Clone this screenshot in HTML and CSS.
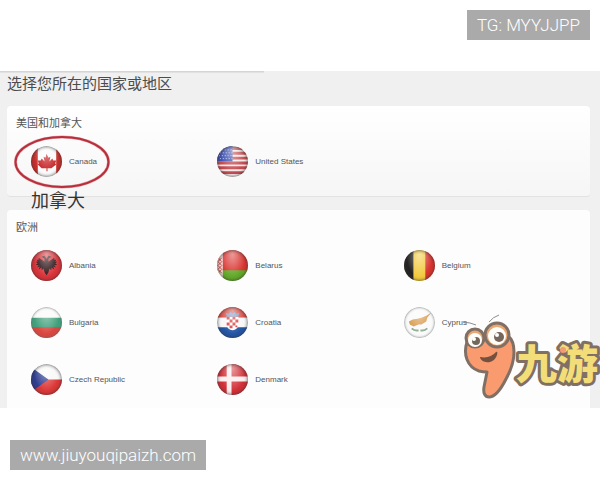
FILE: index.html
```html
<!DOCTYPE html>
<html lang="zh-CN">
<head>
<meta charset="utf-8">
<title>选择您所在的国家或地区</title>
<link rel="stylesheet" href="styles.css">
</head>
<body>
<header class="top"><span class="tag">TG: MYYJJPP</span></header>
<main class="picker">
  <h1 class="title">选择您所在的国家或地区</h1>
  <section class="panel panel-america">
    <h2 class="region">美国和加拿大</h2>
    <ul class="countries">
      <li class="country">
        <span class="flag"><svg viewBox="0 0 32 32"><path fill="#fafafa" d="M0 0h32v32H0z"/><path fill="#c92f2b" d="M0 0h7v32H0zM26 0h6v32h-6z"/><path fill="#c51f22" d="M16 8l2 4 2-1-1 5 3-3 1 2 3 0-1 3 1 1-5 4-4 0v3h-1v-3l-5 0-4-4 1-1-1-3 3 0 1-2 3 3-1-5 2 1z"/></svg></span>
        <span class="name">Canada</span>
        <svg class="ring" viewBox="0 0 96 54"><ellipse cx="48" cy="27" rx="46.500" ry="25" fill="none" stroke="#e8a0a5" stroke-width="3"/><ellipse cx="48" cy="27" rx="46.500" ry="25" fill="none" stroke="#b5303c" stroke-width="2"/></svg>
        <span class="note">加拿大</span>
      </li>
      <li class="country">
        <span class="flag"><svg viewBox="0 0 32 32"><path fill="#f5e9e8" d="M0 0h32v32H0z"/><path fill="#c34b50" d="M0 1h32v3H0zM0 6h32v3H0zM0 11h32v3H0zM0 16h32v3H0zM0 21h32v3H0zM0 26h32v3H0z"/><path fill="#3b4fae" d="M0 0h16v16H0z"/><path stroke="#c8d0f4" stroke-width="1" stroke-dasharray="1 2" d="M2 4h14M3 7h13M2 10h14M3 13h13"/></svg></span>
        <span class="name">United States</span>
      </li>
    </ul>
  </section>
  <section class="panel panel-europe">
    <h2 class="region">欧洲</h2>
    <ul class="countries">
      <li class="country">
        <span class="flag"><svg viewBox="0 0 32 32"><path fill="#d9333a" d="M0 0h32v32H0z"/><path fill="#2c1114" d="M16 9l-2-3-3 1 3 2 0 3-3-2-3-2 0 2-2 0 1 2-2 0 2 2-2 1 3 1-2 2 3-1-1 3 3-2 0 3 2-2 1 4 2 3 2-3 1-4 2 2 0-3 3 2-1-3 3 1-2-2 3-1-2-1 2-2-2 0 1-2-2 0 0-2-3 2-3 2 0-3 3-2-3-1z"/></svg></span>
        <span class="name">Albania</span>
      </li>
      <li class="country">
        <span class="flag"><svg viewBox="0 0 32 32"><path fill="#d93430" d="M0 0h32v22H0z"/><path fill="#62a829" d="M0 21h32v11H0z"/><path fill="#f2dcd9" d="M0 0h6v32H0z"/><path fill="none" stroke="#c94444" d="M1 8l4 4-4 4 4 4-4 4M5 8l-4 4 4 4-4 4 4 4"/></svg></span>
        <span class="name">Belarus</span>
      </li>
      <li class="country">
        <span class="flag"><svg viewBox="0 0 32 32"><path fill="#252321" d="M0 0h10v32H0z"/><path fill="#f2c93c" d="M10 0h13v32H10z"/><path fill="#d9342e" d="M22 0h10v32H22z"/></svg></span>
        <span class="name">Belgium</span>
      </li>
      <li class="country">
        <span class="flag pale"><svg viewBox="0 0 32 32"><path fill="#fafafa" d="M0 0h32v12H0z"/><path fill="#41a07b" d="M0 11h32v11H0z"/><path fill="#d94740" d="M0 21h32v11H0z"/></svg></span>
        <span class="name">Bulgaria</span>
      </li>
      <li class="country">
        <span class="flag"><svg viewBox="0 0 32 32"><path fill="#dc4b43" d="M0 0h32v11H0z"/><path fill="#f8f8f8" d="M0 11h32v11H0z"/><path fill="#2456a6" d="M0 21h32v11H0z"/><path fill="#fff" d="M10 10h12v9q-1 4-6 5-5-1-6-5z"/><path fill="#d93c3a" d="M10 10h3v3h-3zM16 10h3v3h-3zM13 13h3v3h-3zM19 13h3v3h-3zM10 16h3v3h-3zM16 16h3v3h-3zM13 19h3v3h-3zM19 19h2v2h-2z"/><path fill="#8098c4" d="M9 6l3 1 2-2 2 2 2-2 2 2 3-1-1 4H10z"/></svg></span>
        <span class="name">Croatia</span>
      </li>
      <li class="country">
        <span class="flag pale"><svg viewBox="0 0 32 32"><path fill="#fafafa" d="M0 0h32v32H0z"/><path fill="#d89a4d" d="M5 15l4-2 5-1 4-1 5-2 5-3-4 5-1 4-5 3-3 0-5 2-4-2z"/><path fill="none" stroke="#8cad91" stroke-width="2" d="M8 22q3 3 7 2M24 22q-3 3-7 2"/></svg></span>
        <span class="name">Cyprus</span>
      </li>
      <li class="country">
        <span class="flag"><svg viewBox="0 0 32 32"><path fill="#f8f8f8" d="M0 0h32v17H0z"/><path fill="#dc3737" d="M0 16h32v16H0z"/><path fill="#303e91" d="M0 3l18 13L0 29z"/></svg></span>
        <span class="name">Czech Republic</span>
      </li>
      <li class="country">
        <span class="flag"><svg viewBox="0 0 32 32"><path fill="#d23038" d="M0 0h32v32H0z"/><path fill="#fbecec" d="M10 0h5v32h-5zM0 13h32v5H0z"/></svg></span>
        <span class="name">Denmark</span>
      </li>
    </ul>
  </section>
  <svg class="mascot" viewBox="0 0 150 108" role="img" aria-label="九游">
    <path fill="none" stroke="#8d8d8d" stroke-width="1" d="M13 22l7 1 6 2M39 22q4-5 10-7"/>
    <path fill="#f99b6f" stroke="#806f65" stroke-width="3" stroke-linejoin="round" d="M17 42c-4 12 0 25 12 29q4 1 8 1l-3 15c-1 6 1 10 5 10 6 0 12-8 17-18 5-9 8-18 8-27 0-8-2-13-6-16z"/>
    <path fill="#75503f" d="M30 57q10 2 16-5 2-1 1 3c-2 6-7 8-11 7-3 0-6-3-6-5z"/>
    <circle cx="25" cy="38" r="9" fill="#e7a875" stroke="#806f65" stroke-width="3"/>
    <circle cx="25" cy="40" r="7" fill="#fffdf8"/>
    <circle cx="26" cy="41" r="4" fill="#76675c"/><circle cx="24" cy="39" r="2" fill="#fff"/>
    <circle cx="47" cy="35" r="12" fill="#e7a875" stroke="#806f65" stroke-width="3"/>
    <circle cx="47" cy="36" r="9" fill="#fffdf8"/>
    <circle cx="49" cy="37" r="5" fill="#76675c"/><circle cx="47" cy="35" r="2" fill="#fff"/>
    <text class="brand" x="66" y="79">九游</text>
    <circle cx="113" cy="50" r="3" fill="#f39a78"/>
  </svg>
</main>
<footer class="bottom"><span class="tag">www.jiuyouqipaizh.com</span></footer>
</body>
</html>
```
FILE: styles.css
```css
* { box-sizing: border-box; }

body {
  margin: 0;
  background: #fff;
  color: #555;
  font-family: "Liberation Sans", "Noto Sans CJK SC", sans-serif;
}

.top {
  display: flex;
  justify-content: flex-end;
  padding: 10px 10px 31px;
}

.bottom {
  display: flex;
  padding: 32px 10px 10px;
}

.tag {
  padding: 0 10px;
  background: #aaa;
  color: #fff;
  font: 300 17px/30px Roboto, sans-serif;
}

.picker {
  position: relative;
  padding: 0 10px 0 7px;
  background: #f0f0f0;
}

.picker::before {
  content: "";
  position: absolute;
  top: 0;
  left: 0;
  width: 44%;
  height: 2px;
  background: linear-gradient(#cfcfcf, #e8e8e8);
}

.title {
  margin: 0;
  padding-bottom: 10px;
  color: #4c4c4c;
  font-size: 15px;
  font-weight: 400;
  line-height: 25px;
}

.panel {
  padding: 8px 0 13px;
  border-radius: 4px;
}

.panel-america {
  padding-bottom: 19px;
  margin-bottom: 13px;
  border-bottom: 1px solid #e2e2e2;
  background: linear-gradient(#fff, #f6f6f6);
}

.panel-europe {
  border-radius: 4px 4px 0 0;
  background: #fdfdfd;
}

.region {
  margin: 0;
  padding-left: 9px;
  color: #555;
  font-size: 11px;
  font-weight: 400;
  line-height: 18px;
}

.countries {
  display: grid;
  grid-template-columns: repeat(3, 1fr);
  row-gap: 26px;
  margin: 0;
  padding: 14px 0 0 24px;
  list-style: none;
}

.country {
  position: relative;
  display: flex;
  align-items: center;
  gap: 7px;
}

.flag {
  position: relative;
  width: 31px;
  height: 31px;
  border-radius: 50%;
  overflow: hidden;
}

.flag svg {
  display: block;
  width: 100%;
  height: 100%;
}

.flag::after {
  content: "";
  position: absolute;
  inset: 0;
  border-radius: 50%;
  background: radial-gradient(ellipse at 50% 15%, rgba(255, 255, 255, 0.5), rgba(255, 255, 255, 0) 60%);
  box-shadow: inset 0 0 3px 1px rgba(50, 50, 50, 0.6);
}

.flag.pale::after {
  box-shadow: inset 0 0 2px 1px rgba(90, 100, 100, 0.5);
}

.name {
  color: #555;
  font-size: 8px;
  line-height: 12px;
}

.ring {
  position: absolute;
  top: -11px;
  left: -17px;
  width: 96px;
  height: 54px;
}

.note {
  position: absolute;
  top: 43px;
  left: 0;
  color: #333;
  font-size: 18px;
  line-height: 24px;
}

.mascot {
  position: absolute;
  right: 0;
  bottom: 0;
  width: 150px;
  height: 108px;
}

.brand {
  fill: #f3dd78;
  stroke: #806f65;
  stroke-width: 6px;
  stroke-linejoin: round;
  paint-order: stroke;
  font-family: "Noto Sans CJK SC", sans-serif;
  font-size: 41px;
  font-weight: 900;
}
```
